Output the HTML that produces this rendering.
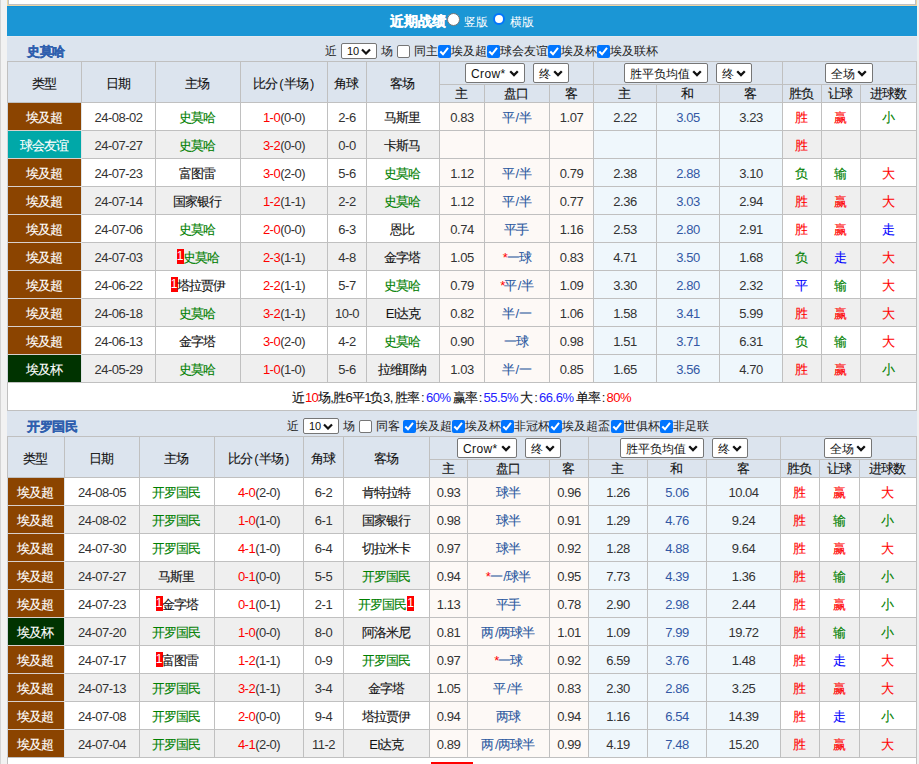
<!DOCTYPE html>
<html><head><meta charset="utf-8"><style>
html,body{margin:0;padding:0;}
body{width:919px;height:764px;overflow:hidden;position:relative;background:#fff;font-family:"Liberation Sans", sans-serif;}
body>div{position:absolute;box-sizing:content-box;}
.t{text-align:center;white-space:nowrap;}
.sel{background:#fff;border:1px solid #767676;border-radius:3px;}
.sel .sl{position:absolute;left:5px;top:0;line-height:17px;font-size:12px;color:#111;white-space:nowrap}
.sel .chev{position:absolute;right:5px;top:6px}
.c{letter-spacing:-1px;-webkit-text-stroke:0.12px currentColor;position:relative;left:-0.7px}
.one{display:inline-block;background:#f00;color:#fff;font-size:12px;width:7px;height:15px;line-height:15px;text-align:center;vertical-align:2px;letter-spacing:0!important}
.one span{letter-spacing:0!important}
</style></head><body>
<div style="left:0px;top:0px;width:1px;height:764px;background:#d4d4d4;"></div>
<div style="left:1px;top:0px;width:6px;height:764px;background:#f2f2f2;"></div>
<div style="left:917px;top:0px;width:2px;height:764px;background:#f0f0f0;"></div>
<div style="left:7px;top:0px;width:910px;height:6px;background:#ecd6a4;"></div>
<div style="left:8px;top:0px;width:908px;height:5px;background:#c0c0c4;"></div>
<div style="left:9px;top:0px;width:906px;height:4px;background:#ffffff;"></div>
<div style="left:7px;top:6px;width:910px;height:30px;background:#1b96d5;"></div>
<div style="left:7px;top:6px;width:910px;height:1px;background:#1190d6;"></div>
<div style="left:7px;top:36px;width:910px;height:1px;background:#e6e9ee;"></div>
<div style="left:390px;top:12px;color:#fff;font-weight:bold;font-size:14px;line-height:18px;white-space:nowrap;-webkit-text-stroke:0.3px #fff">近期战绩</div>
<div style="left:447px;top:13px;width:11px;height:11px;border-radius:50%;border:1px solid #767676;background:#fff"></div>
<div style="left:464px;top:13px;color:#fff;font-size:12px;line-height:18px;white-space:nowrap">竖版</div>
<div style="left:493px;top:13px;width:8px;height:8px;border-radius:50%;border:2px solid #0075ff;background:#fff"></div>
<div style="left:510px;top:13px;color:#fff;font-size:12px;line-height:18px;white-space:nowrap">横版</div>
<div style="left:7px;top:37px;width:910px;height:24px;background:#dce4ee;"></div>
<div style="left:27px;top:44px;color:#2f5fae;font-weight:bold;font-size:13px;line-height:15px;white-space:nowrap;letter-spacing:-0.3px;-webkit-text-stroke:0.3px #2f5fae">史莫哈</div>
<div style="left:325px;top:44px;color:#222;font-size:12px;line-height:15px;white-space:nowrap">近</div>
<div class="sel" style="left:341px;top:43px;width:34px;height:14px;border-radius:2px"><span class="sl" style="line-height:14px;left:5px;font-size:11px">10</span><svg class="chev" style="top:4px;right:5px" width="10" height="7" viewBox="0 0 10 7"><path d="M1 1.5 L5 5.5 L9 1.5" stroke="#111" stroke-width="2.2" fill="none"/></svg></div>
<div style="left:381px;top:44px;color:#222;font-size:12px;line-height:15px;white-space:nowrap">场</div>
<div style="left:397px;top:45px;width:11px;height:11px;background:#fff;border:1px solid #767676;border-radius:2px"></div>
<div style="left:414px;top:44px;color:#222;font-size:12px;line-height:15px;white-space:nowrap">同主</div>
<div style="left:438px;top:45px;width:13px;height:13px;background:#0075ff;border-radius:2px"><svg width="13" height="13" viewBox="0 0 13 13" style="position:absolute;left:0;top:0"><path d="M2.3 6.5 L5.0 9.3 L10.0 2.9" stroke="#fff" stroke-width="2" fill="none"/></svg></div>
<div style="left:451px;top:44px;color:#222;font-size:12px;line-height:15px;white-space:nowrap">埃及超</div>
<div style="left:487px;top:45px;width:13px;height:13px;background:#0075ff;border-radius:2px"><svg width="13" height="13" viewBox="0 0 13 13" style="position:absolute;left:0;top:0"><path d="M2.3 6.5 L5.0 9.3 L10.0 2.9" stroke="#fff" stroke-width="2" fill="none"/></svg></div>
<div style="left:500px;top:44px;color:#222;font-size:12px;line-height:15px;white-space:nowrap">球会友谊</div>
<div style="left:548px;top:45px;width:13px;height:13px;background:#0075ff;border-radius:2px"><svg width="13" height="13" viewBox="0 0 13 13" style="position:absolute;left:0;top:0"><path d="M2.3 6.5 L5.0 9.3 L10.0 2.9" stroke="#fff" stroke-width="2" fill="none"/></svg></div>
<div style="left:561px;top:44px;color:#222;font-size:12px;line-height:15px;white-space:nowrap">埃及杯</div>
<div style="left:597px;top:45px;width:13px;height:13px;background:#0075ff;border-radius:2px"><svg width="13" height="13" viewBox="0 0 13 13" style="position:absolute;left:0;top:0"><path d="M2.3 6.5 L5.0 9.3 L10.0 2.9" stroke="#fff" stroke-width="2" fill="none"/></svg></div>
<div style="left:610px;top:44px;color:#222;font-size:12px;line-height:15px;white-space:nowrap">埃及联杯</div>
<div style="left:7px;top:61px;width:910px;height:41px;background:#dce4ee;"></div>
<div style="left:7px;top:102px;width:910px;height:28px;background:#ffffff;"></div>
<div style="left:439px;top:102px;width:154px;height:28px;background:#fdf9f6;"></div>
<div style="left:593px;top:102px;width:189px;height:28px;background:#eff7fc;"></div>
<div style="left:7px;top:130px;width:910px;height:28px;background:#efefef;"></div>
<div style="left:439px;top:130px;width:154px;height:28px;background:#fdf9f6;"></div>
<div style="left:593px;top:130px;width:189px;height:28px;background:#eff7fc;"></div>
<div style="left:7px;top:158px;width:910px;height:28px;background:#ffffff;"></div>
<div style="left:439px;top:158px;width:154px;height:28px;background:#fdf9f6;"></div>
<div style="left:593px;top:158px;width:189px;height:28px;background:#eff7fc;"></div>
<div style="left:7px;top:186px;width:910px;height:28px;background:#efefef;"></div>
<div style="left:439px;top:186px;width:154px;height:28px;background:#fdf9f6;"></div>
<div style="left:593px;top:186px;width:189px;height:28px;background:#eff7fc;"></div>
<div style="left:7px;top:214px;width:910px;height:28px;background:#ffffff;"></div>
<div style="left:439px;top:214px;width:154px;height:28px;background:#fdf9f6;"></div>
<div style="left:593px;top:214px;width:189px;height:28px;background:#eff7fc;"></div>
<div style="left:7px;top:242px;width:910px;height:28px;background:#efefef;"></div>
<div style="left:439px;top:242px;width:154px;height:28px;background:#fdf9f6;"></div>
<div style="left:593px;top:242px;width:189px;height:28px;background:#eff7fc;"></div>
<div style="left:7px;top:270px;width:910px;height:28px;background:#ffffff;"></div>
<div style="left:439px;top:270px;width:154px;height:28px;background:#fdf9f6;"></div>
<div style="left:593px;top:270px;width:189px;height:28px;background:#eff7fc;"></div>
<div style="left:7px;top:298px;width:910px;height:28px;background:#efefef;"></div>
<div style="left:439px;top:298px;width:154px;height:28px;background:#fdf9f6;"></div>
<div style="left:593px;top:298px;width:189px;height:28px;background:#eff7fc;"></div>
<div style="left:7px;top:326px;width:910px;height:28px;background:#ffffff;"></div>
<div style="left:439px;top:326px;width:154px;height:28px;background:#fdf9f6;"></div>
<div style="left:593px;top:326px;width:189px;height:28px;background:#eff7fc;"></div>
<div style="left:7px;top:354px;width:910px;height:28px;background:#efefef;"></div>
<div style="left:439px;top:354px;width:154px;height:28px;background:#fdf9f6;"></div>
<div style="left:593px;top:354px;width:189px;height:28px;background:#eff7fc;"></div>
<div style="left:7px;top:382px;width:910px;height:28px;background:#ffffff;"></div>
<div style="left:7px;top:61px;width:910px;height:1px;background:#c0c0c0;"></div>
<div style="left:439px;top:84px;width:477px;height:1px;background:#c0c0c0;"></div>
<div style="left:7px;top:102px;width:910px;height:1px;background:#c0c0c0;"></div>
<div style="left:7px;top:130px;width:910px;height:1px;background:#c0c0c0;"></div>
<div style="left:7px;top:158px;width:910px;height:1px;background:#c0c0c0;"></div>
<div style="left:7px;top:186px;width:910px;height:1px;background:#c0c0c0;"></div>
<div style="left:7px;top:214px;width:910px;height:1px;background:#c0c0c0;"></div>
<div style="left:7px;top:242px;width:910px;height:1px;background:#c0c0c0;"></div>
<div style="left:7px;top:270px;width:910px;height:1px;background:#c0c0c0;"></div>
<div style="left:7px;top:298px;width:910px;height:1px;background:#c0c0c0;"></div>
<div style="left:7px;top:326px;width:910px;height:1px;background:#c0c0c0;"></div>
<div style="left:7px;top:354px;width:910px;height:1px;background:#c0c0c0;"></div>
<div style="left:7px;top:382px;width:910px;height:1px;background:#c0c0c0;"></div>
<div style="left:7px;top:410px;width:910px;height:1px;background:#c0c0c0;"></div>
<div style="left:7px;top:61px;width:1px;height:321px;background:#c0c0c0;"></div>
<div style="left:81px;top:61px;width:1px;height:321px;background:#c0c0c0;"></div>
<div style="left:155px;top:61px;width:1px;height:321px;background:#c0c0c0;"></div>
<div style="left:240px;top:61px;width:1px;height:321px;background:#c0c0c0;"></div>
<div style="left:327px;top:61px;width:1px;height:321px;background:#c0c0c0;"></div>
<div style="left:366px;top:61px;width:1px;height:321px;background:#c0c0c0;"></div>
<div style="left:439px;top:61px;width:1px;height:321px;background:#c0c0c0;"></div>
<div style="left:484px;top:84px;width:1px;height:298px;background:#c0c0c0;"></div>
<div style="left:549px;top:84px;width:1px;height:298px;background:#c0c0c0;"></div>
<div style="left:593px;top:61px;width:1px;height:321px;background:#c0c0c0;"></div>
<div style="left:656px;top:84px;width:1px;height:298px;background:#c0c0c0;"></div>
<div style="left:719px;top:84px;width:1px;height:298px;background:#c0c0c0;"></div>
<div style="left:782px;top:61px;width:1px;height:321px;background:#c0c0c0;"></div>
<div style="left:821px;top:84px;width:1px;height:298px;background:#c0c0c0;"></div>
<div style="left:860px;top:84px;width:1px;height:298px;background:#c0c0c0;"></div>
<div style="left:916px;top:61px;width:1px;height:321px;background:#c0c0c0;"></div>
<div style="left:7px;top:382px;width:1px;height:29px;background:#c0c0c0;"></div>
<div style="left:916px;top:382px;width:1px;height:29px;background:#c0c0c0;"></div>
<div style="left:7px;top:103px;width:1px;height:279px;background:#cdd3da;"></div>
<div style="left:81px;top:103px;width:1px;height:279px;background:#dfe3e6;"></div>
<div style="left:8px;top:103px;width:73px;height:27px;background:#8b4400;"></div>
<div style="left:8px;top:131px;width:73px;height:27px;background:#00a8a8;"></div>
<div style="left:8px;top:130px;width:73px;height:1px;background:#d8d0cc;"></div>
<div style="left:8px;top:159px;width:73px;height:27px;background:#8b4400;"></div>
<div style="left:8px;top:158px;width:73px;height:1px;background:#d8d0cc;"></div>
<div style="left:8px;top:187px;width:73px;height:27px;background:#8b4400;"></div>
<div style="left:8px;top:186px;width:73px;height:1px;background:#d8d0cc;"></div>
<div style="left:8px;top:215px;width:73px;height:27px;background:#8b4400;"></div>
<div style="left:8px;top:214px;width:73px;height:1px;background:#d8d0cc;"></div>
<div style="left:8px;top:243px;width:73px;height:27px;background:#8b4400;"></div>
<div style="left:8px;top:242px;width:73px;height:1px;background:#d8d0cc;"></div>
<div style="left:8px;top:271px;width:73px;height:27px;background:#8b4400;"></div>
<div style="left:8px;top:270px;width:73px;height:1px;background:#d8d0cc;"></div>
<div style="left:8px;top:299px;width:73px;height:27px;background:#8b4400;"></div>
<div style="left:8px;top:298px;width:73px;height:1px;background:#d8d0cc;"></div>
<div style="left:8px;top:327px;width:73px;height:27px;background:#8b4400;"></div>
<div style="left:8px;top:326px;width:73px;height:1px;background:#d8d0cc;"></div>
<div style="left:8px;top:355px;width:73px;height:27px;background:#003300;"></div>
<div style="left:8px;top:354px;width:73px;height:1px;background:#d8d0cc;"></div>
<div class="t" style="left:8px;top:64px;width:73px;height:40px;line-height:40px;color:#111111;font-size:13px;"><span class=c>类型</span></div>
<div class="t" style="left:82px;top:64px;width:73px;height:40px;line-height:40px;color:#111111;font-size:13px;"><span class=c>日期</span></div>
<div class="t" style="left:156px;top:64px;width:84px;height:40px;line-height:40px;color:#111111;font-size:13px;"><span class=c>主场</span></div>
<div class="t" style="left:241px;top:64px;width:86px;height:40px;line-height:40px;color:#111111;font-size:13px;"><span class=c>比分</span><span style="padding:0 2px 0 1px"><span style="letter-spacing:-0.5px">(</span></span><span class=c>半场</span><span style="padding-left:1px"><span style="letter-spacing:-0.5px">)</span></span></div>
<div class="t" style="left:328px;top:64px;width:38px;height:40px;line-height:40px;color:#111111;font-size:13px;"><span class=c>角球</span></div>
<div class="t" style="left:367px;top:64px;width:72px;height:40px;line-height:40px;color:#111111;font-size:13px;"><span class=c>客场</span></div>
<div class="t" style="left:440px;top:85px;width:44px;height:17px;line-height:17px;color:#111111;font-size:13px;"><span class=c>主</span></div>
<div class="t" style="left:485px;top:85px;width:64px;height:17px;line-height:17px;color:#111111;font-size:13px;"><span class=c>盘口</span></div>
<div class="t" style="left:550px;top:85px;width:43px;height:17px;line-height:17px;color:#111111;font-size:13px;"><span class=c>客</span></div>
<div class="t" style="left:594px;top:85px;width:62px;height:17px;line-height:17px;color:#111111;font-size:13px;"><span class=c>主</span></div>
<div class="t" style="left:657px;top:85px;width:62px;height:17px;line-height:17px;color:#111111;font-size:13px;"><span class=c>和</span></div>
<div class="t" style="left:720px;top:85px;width:62px;height:17px;line-height:17px;color:#111111;font-size:13px;"><span class=c>客</span></div>
<div class="t" style="left:783px;top:85px;width:38px;height:17px;line-height:17px;color:#111111;font-size:13px;"><span class=c>胜负</span></div>
<div class="t" style="left:822px;top:85px;width:38px;height:17px;line-height:17px;color:#111111;font-size:13px;"><span class=c>让球</span></div>
<div class="t" style="left:861px;top:85px;width:55px;height:17px;line-height:17px;color:#111111;font-size:13px;"><span class=c>进球数</span></div>
<div class="sel" style="left:465px;top:63px;width:58px;height:18px;border-radius:2px"><span class="sl" style="top:2px;letter-spacing:0.4px">Crow*</span><svg class="chev" width="10" height="7" viewBox="0 0 10 7"><path d="M1.2 1.2 L5 5 L8.8 1.2" stroke="#111" stroke-width="2.3" fill="none"/></svg></div>
<div class="sel" style="left:533px;top:63px;width:34px;height:18px;border-radius:2px"><span class="sl" style="top:2px;">终</span><svg class="chev" width="10" height="7" viewBox="0 0 10 7"><path d="M1.2 1.2 L5 5 L8.8 1.2" stroke="#111" stroke-width="2.3" fill="none"/></svg></div>
<div class="sel" style="left:624px;top:63px;width:82px;height:18px;border-radius:2px"><span class="sl" style="top:2px;">胜平负均值</span><svg class="chev" width="10" height="7" viewBox="0 0 10 7"><path d="M1.2 1.2 L5 5 L8.8 1.2" stroke="#111" stroke-width="2.3" fill="none"/></svg></div>
<div class="sel" style="left:716px;top:63px;width:34px;height:18px;border-radius:2px"><span class="sl" style="top:2px;">终</span><svg class="chev" width="10" height="7" viewBox="0 0 10 7"><path d="M1.2 1.2 L5 5 L8.8 1.2" stroke="#111" stroke-width="2.3" fill="none"/></svg></div>
<div class="sel" style="left:825px;top:63px;width:46px;height:18px;border-radius:2px"><span class="sl" style="top:2px;">全场</span><svg class="chev" width="10" height="7" viewBox="0 0 10 7"><path d="M1.2 1.2 L5 5 L8.8 1.2" stroke="#111" stroke-width="2.3" fill="none"/></svg></div>
<div class="t" style="left:8px;top:104px;width:73px;height:27px;line-height:27px;color:#ffffff;font-size:13px;"><span class=c>埃及超</span></div>
<div class="t" style="left:82px;top:104px;width:73px;height:27px;line-height:27px;color:#333333;font-size:13px;"><span style="letter-spacing:-0.5px">24-08-02</span></div>
<div class="t" style="left:156px;top:104px;width:84px;height:27px;line-height:27px;color:#111111;font-size:13px;"><span style="color:#008000"><span class=c>史莫哈</span></span></div>
<div class="t" style="left:241px;top:104px;width:86px;height:27px;line-height:27px;color:#333333;font-size:13px;"><span style="color:#ff0000"><span style="letter-spacing:-0.5px">1-0</span></span><span style="letter-spacing:-0.5px">(0-0)</span></div>
<div class="t" style="left:328px;top:104px;width:38px;height:27px;line-height:27px;color:#333333;font-size:13px;"><span style="letter-spacing:-0.5px">2-6</span></div>
<div class="t" style="left:367px;top:104px;width:72px;height:27px;line-height:27px;color:#111111;font-size:13px;"><span class=c>马斯里</span></div>
<div class="t" style="left:440px;top:104px;width:44px;height:27px;line-height:27px;color:#333333;font-size:13px;"><span style="letter-spacing:-0.5px">0.83</span></div>
<div class="t" style="left:485px;top:104px;width:64px;height:27px;line-height:27px;color:#2a58a0;font-size:13px;"><span class=c>平</span><span style="letter-spacing:-0.5px"><span style="padding:0 0.8px">/</span></span><span class=c>半</span></div>
<div class="t" style="left:550px;top:104px;width:43px;height:27px;line-height:27px;color:#333333;font-size:13px;"><span style="letter-spacing:-0.5px">1.07</span></div>
<div class="t" style="left:594px;top:104px;width:62px;height:27px;line-height:27px;color:#333333;font-size:13px;"><span style="letter-spacing:-0.5px">2.22</span></div>
<div class="t" style="left:657px;top:104px;width:62px;height:27px;line-height:27px;color:#3358a4;font-size:13px;"><span style="letter-spacing:-0.5px">3.05</span></div>
<div class="t" style="left:720px;top:104px;width:62px;height:27px;line-height:27px;color:#333333;font-size:13px;"><span style="letter-spacing:-0.5px">3.23</span></div>
<div class="t" style="left:783px;top:104px;width:38px;height:27px;line-height:27px;color:#ff0000;font-size:13px;"><span class=c>胜</span></div>
<div class="t" style="left:822px;top:104px;width:38px;height:27px;line-height:27px;color:#ff0000;font-size:13px;"><span class=c>赢</span></div>
<div class="t" style="left:861px;top:104px;width:55px;height:27px;line-height:27px;color:#008000;font-size:13px;"><span class=c>小</span></div>
<div class="t" style="left:8px;top:132px;width:73px;height:27px;line-height:27px;color:#ffffff;font-size:13px;"><span class=c>球会友谊</span></div>
<div class="t" style="left:82px;top:132px;width:73px;height:27px;line-height:27px;color:#333333;font-size:13px;"><span style="letter-spacing:-0.5px">24-07-27</span></div>
<div class="t" style="left:156px;top:132px;width:84px;height:27px;line-height:27px;color:#111111;font-size:13px;"><span style="color:#008000"><span class=c>史莫哈</span></span></div>
<div class="t" style="left:241px;top:132px;width:86px;height:27px;line-height:27px;color:#333333;font-size:13px;"><span style="color:#ff0000"><span style="letter-spacing:-0.5px">3-2</span></span><span style="letter-spacing:-0.5px">(0-0)</span></div>
<div class="t" style="left:328px;top:132px;width:38px;height:27px;line-height:27px;color:#333333;font-size:13px;"><span style="letter-spacing:-0.5px">0-0</span></div>
<div class="t" style="left:367px;top:132px;width:72px;height:27px;line-height:27px;color:#111111;font-size:13px;"><span class=c>卡斯马</span></div>
<div class="t" style="left:783px;top:132px;width:38px;height:27px;line-height:27px;color:#ff0000;font-size:13px;"><span class=c>胜</span></div>
<div class="t" style="left:8px;top:160px;width:73px;height:27px;line-height:27px;color:#ffffff;font-size:13px;"><span class=c>埃及超</span></div>
<div class="t" style="left:82px;top:160px;width:73px;height:27px;line-height:27px;color:#333333;font-size:13px;"><span style="letter-spacing:-0.5px">24-07-23</span></div>
<div class="t" style="left:156px;top:160px;width:84px;height:27px;line-height:27px;color:#111111;font-size:13px;"><span class=c>富图雷</span></div>
<div class="t" style="left:241px;top:160px;width:86px;height:27px;line-height:27px;color:#333333;font-size:13px;"><span style="color:#ff0000"><span style="letter-spacing:-0.5px">3-0</span></span><span style="letter-spacing:-0.5px">(2-0)</span></div>
<div class="t" style="left:328px;top:160px;width:38px;height:27px;line-height:27px;color:#333333;font-size:13px;"><span style="letter-spacing:-0.5px">5-6</span></div>
<div class="t" style="left:367px;top:160px;width:72px;height:27px;line-height:27px;color:#111111;font-size:13px;"><span style="color:#008000"><span class=c>史莫哈</span></span></div>
<div class="t" style="left:440px;top:160px;width:44px;height:27px;line-height:27px;color:#333333;font-size:13px;"><span style="letter-spacing:-0.5px">1.12</span></div>
<div class="t" style="left:485px;top:160px;width:64px;height:27px;line-height:27px;color:#2a58a0;font-size:13px;"><span class=c>平</span><span style="letter-spacing:-0.5px"><span style="padding:0 0.8px">/</span></span><span class=c>半</span></div>
<div class="t" style="left:550px;top:160px;width:43px;height:27px;line-height:27px;color:#333333;font-size:13px;"><span style="letter-spacing:-0.5px">0.79</span></div>
<div class="t" style="left:594px;top:160px;width:62px;height:27px;line-height:27px;color:#333333;font-size:13px;"><span style="letter-spacing:-0.5px">2.38</span></div>
<div class="t" style="left:657px;top:160px;width:62px;height:27px;line-height:27px;color:#3358a4;font-size:13px;"><span style="letter-spacing:-0.5px">2.88</span></div>
<div class="t" style="left:720px;top:160px;width:62px;height:27px;line-height:27px;color:#333333;font-size:13px;"><span style="letter-spacing:-0.5px">3.10</span></div>
<div class="t" style="left:783px;top:160px;width:38px;height:27px;line-height:27px;color:#008000;font-size:13px;"><span class=c>负</span></div>
<div class="t" style="left:822px;top:160px;width:38px;height:27px;line-height:27px;color:#008000;font-size:13px;"><span class=c>输</span></div>
<div class="t" style="left:861px;top:160px;width:55px;height:27px;line-height:27px;color:#ff0000;font-size:13px;"><span class=c>大</span></div>
<div class="t" style="left:8px;top:188px;width:73px;height:27px;line-height:27px;color:#ffffff;font-size:13px;"><span class=c>埃及超</span></div>
<div class="t" style="left:82px;top:188px;width:73px;height:27px;line-height:27px;color:#333333;font-size:13px;"><span style="letter-spacing:-0.5px">24-07-14</span></div>
<div class="t" style="left:156px;top:188px;width:84px;height:27px;line-height:27px;color:#111111;font-size:13px;"><span class=c>国家银行</span></div>
<div class="t" style="left:241px;top:188px;width:86px;height:27px;line-height:27px;color:#333333;font-size:13px;"><span style="color:#ff0000"><span style="letter-spacing:-0.5px">1-2</span></span><span style="letter-spacing:-0.5px">(1-1)</span></div>
<div class="t" style="left:328px;top:188px;width:38px;height:27px;line-height:27px;color:#333333;font-size:13px;"><span style="letter-spacing:-0.5px">2-2</span></div>
<div class="t" style="left:367px;top:188px;width:72px;height:27px;line-height:27px;color:#111111;font-size:13px;"><span style="color:#008000"><span class=c>史莫哈</span></span></div>
<div class="t" style="left:440px;top:188px;width:44px;height:27px;line-height:27px;color:#333333;font-size:13px;"><span style="letter-spacing:-0.5px">1.12</span></div>
<div class="t" style="left:485px;top:188px;width:64px;height:27px;line-height:27px;color:#2a58a0;font-size:13px;"><span class=c>平</span><span style="letter-spacing:-0.5px"><span style="padding:0 0.8px">/</span></span><span class=c>半</span></div>
<div class="t" style="left:550px;top:188px;width:43px;height:27px;line-height:27px;color:#333333;font-size:13px;"><span style="letter-spacing:-0.5px">0.77</span></div>
<div class="t" style="left:594px;top:188px;width:62px;height:27px;line-height:27px;color:#333333;font-size:13px;"><span style="letter-spacing:-0.5px">2.36</span></div>
<div class="t" style="left:657px;top:188px;width:62px;height:27px;line-height:27px;color:#3358a4;font-size:13px;"><span style="letter-spacing:-0.5px">3.03</span></div>
<div class="t" style="left:720px;top:188px;width:62px;height:27px;line-height:27px;color:#333333;font-size:13px;"><span style="letter-spacing:-0.5px">2.94</span></div>
<div class="t" style="left:783px;top:188px;width:38px;height:27px;line-height:27px;color:#ff0000;font-size:13px;"><span class=c>胜</span></div>
<div class="t" style="left:822px;top:188px;width:38px;height:27px;line-height:27px;color:#ff0000;font-size:13px;"><span class=c>赢</span></div>
<div class="t" style="left:861px;top:188px;width:55px;height:27px;line-height:27px;color:#ff0000;font-size:13px;"><span class=c>大</span></div>
<div class="t" style="left:8px;top:216px;width:73px;height:27px;line-height:27px;color:#ffffff;font-size:13px;"><span class=c>埃及超</span></div>
<div class="t" style="left:82px;top:216px;width:73px;height:27px;line-height:27px;color:#333333;font-size:13px;"><span style="letter-spacing:-0.5px">24-07-06</span></div>
<div class="t" style="left:156px;top:216px;width:84px;height:27px;line-height:27px;color:#111111;font-size:13px;"><span style="color:#008000"><span class=c>史莫哈</span></span></div>
<div class="t" style="left:241px;top:216px;width:86px;height:27px;line-height:27px;color:#333333;font-size:13px;"><span style="color:#ff0000"><span style="letter-spacing:-0.5px">2-0</span></span><span style="letter-spacing:-0.5px">(0-0)</span></div>
<div class="t" style="left:328px;top:216px;width:38px;height:27px;line-height:27px;color:#333333;font-size:13px;"><span style="letter-spacing:-0.5px">6-3</span></div>
<div class="t" style="left:367px;top:216px;width:72px;height:27px;line-height:27px;color:#111111;font-size:13px;"><span class=c>恩比</span></div>
<div class="t" style="left:440px;top:216px;width:44px;height:27px;line-height:27px;color:#333333;font-size:13px;"><span style="letter-spacing:-0.5px">0.74</span></div>
<div class="t" style="left:485px;top:216px;width:64px;height:27px;line-height:27px;color:#2a58a0;font-size:13px;"><span class=c>平手</span></div>
<div class="t" style="left:550px;top:216px;width:43px;height:27px;line-height:27px;color:#333333;font-size:13px;"><span style="letter-spacing:-0.5px">1.16</span></div>
<div class="t" style="left:594px;top:216px;width:62px;height:27px;line-height:27px;color:#333333;font-size:13px;"><span style="letter-spacing:-0.5px">2.53</span></div>
<div class="t" style="left:657px;top:216px;width:62px;height:27px;line-height:27px;color:#3358a4;font-size:13px;"><span style="letter-spacing:-0.5px">2.80</span></div>
<div class="t" style="left:720px;top:216px;width:62px;height:27px;line-height:27px;color:#333333;font-size:13px;"><span style="letter-spacing:-0.5px">2.91</span></div>
<div class="t" style="left:783px;top:216px;width:38px;height:27px;line-height:27px;color:#ff0000;font-size:13px;"><span class=c>胜</span></div>
<div class="t" style="left:822px;top:216px;width:38px;height:27px;line-height:27px;color:#ff0000;font-size:13px;"><span class=c>赢</span></div>
<div class="t" style="left:861px;top:216px;width:55px;height:27px;line-height:27px;color:#0000ff;font-size:13px;"><span class=c>走</span></div>
<div class="t" style="left:8px;top:244px;width:73px;height:27px;line-height:27px;color:#ffffff;font-size:13px;"><span class=c>埃及超</span></div>
<div class="t" style="left:82px;top:244px;width:73px;height:27px;line-height:27px;color:#333333;font-size:13px;"><span style="letter-spacing:-0.5px">24-07-03</span></div>
<div class="t" style="left:156px;top:244px;width:84px;height:27px;line-height:27px;color:#111111;font-size:13px;"><span class="one"><span style="letter-spacing:-0.5px">1</span></span><span style="color:#008000"><span class=c>史莫哈</span></span></div>
<div class="t" style="left:241px;top:244px;width:86px;height:27px;line-height:27px;color:#333333;font-size:13px;"><span style="color:#ff0000"><span style="letter-spacing:-0.5px">2-3</span></span><span style="letter-spacing:-0.5px">(1-1)</span></div>
<div class="t" style="left:328px;top:244px;width:38px;height:27px;line-height:27px;color:#333333;font-size:13px;"><span style="letter-spacing:-0.5px">4-8</span></div>
<div class="t" style="left:367px;top:244px;width:72px;height:27px;line-height:27px;color:#111111;font-size:13px;"><span class=c>金字塔</span></div>
<div class="t" style="left:440px;top:244px;width:44px;height:27px;line-height:27px;color:#333333;font-size:13px;"><span style="letter-spacing:-0.5px">1.05</span></div>
<div class="t" style="left:485px;top:244px;width:64px;height:27px;line-height:27px;color:#2a58a0;font-size:13px;"><span style="color:#f00"><span style="letter-spacing:-0.5px">*</span></span><span class=c>一球</span></div>
<div class="t" style="left:550px;top:244px;width:43px;height:27px;line-height:27px;color:#333333;font-size:13px;"><span style="letter-spacing:-0.5px">0.83</span></div>
<div class="t" style="left:594px;top:244px;width:62px;height:27px;line-height:27px;color:#333333;font-size:13px;"><span style="letter-spacing:-0.5px">4.71</span></div>
<div class="t" style="left:657px;top:244px;width:62px;height:27px;line-height:27px;color:#3358a4;font-size:13px;"><span style="letter-spacing:-0.5px">3.50</span></div>
<div class="t" style="left:720px;top:244px;width:62px;height:27px;line-height:27px;color:#333333;font-size:13px;"><span style="letter-spacing:-0.5px">1.68</span></div>
<div class="t" style="left:783px;top:244px;width:38px;height:27px;line-height:27px;color:#008000;font-size:13px;"><span class=c>负</span></div>
<div class="t" style="left:822px;top:244px;width:38px;height:27px;line-height:27px;color:#0000ff;font-size:13px;"><span class=c>走</span></div>
<div class="t" style="left:861px;top:244px;width:55px;height:27px;line-height:27px;color:#ff0000;font-size:13px;"><span class=c>大</span></div>
<div class="t" style="left:8px;top:272px;width:73px;height:27px;line-height:27px;color:#ffffff;font-size:13px;"><span class=c>埃及超</span></div>
<div class="t" style="left:82px;top:272px;width:73px;height:27px;line-height:27px;color:#333333;font-size:13px;"><span style="letter-spacing:-0.5px">24-06-22</span></div>
<div class="t" style="left:156px;top:272px;width:84px;height:27px;line-height:27px;color:#111111;font-size:13px;"><span class="one"><span style="letter-spacing:-0.5px">1</span></span><span class=c>塔拉贾伊</span></div>
<div class="t" style="left:241px;top:272px;width:86px;height:27px;line-height:27px;color:#333333;font-size:13px;"><span style="color:#ff0000"><span style="letter-spacing:-0.5px">2-2</span></span><span style="letter-spacing:-0.5px">(1-1)</span></div>
<div class="t" style="left:328px;top:272px;width:38px;height:27px;line-height:27px;color:#333333;font-size:13px;"><span style="letter-spacing:-0.5px">5-7</span></div>
<div class="t" style="left:367px;top:272px;width:72px;height:27px;line-height:27px;color:#111111;font-size:13px;"><span style="color:#008000"><span class=c>史莫哈</span></span></div>
<div class="t" style="left:440px;top:272px;width:44px;height:27px;line-height:27px;color:#333333;font-size:13px;"><span style="letter-spacing:-0.5px">0.79</span></div>
<div class="t" style="left:485px;top:272px;width:64px;height:27px;line-height:27px;color:#2a58a0;font-size:13px;"><span style="color:#f00"><span style="letter-spacing:-0.5px">*</span></span><span class=c>平</span><span style="letter-spacing:-0.5px"><span style="padding:0 0.8px">/</span></span><span class=c>半</span></div>
<div class="t" style="left:550px;top:272px;width:43px;height:27px;line-height:27px;color:#333333;font-size:13px;"><span style="letter-spacing:-0.5px">1.09</span></div>
<div class="t" style="left:594px;top:272px;width:62px;height:27px;line-height:27px;color:#333333;font-size:13px;"><span style="letter-spacing:-0.5px">3.30</span></div>
<div class="t" style="left:657px;top:272px;width:62px;height:27px;line-height:27px;color:#3358a4;font-size:13px;"><span style="letter-spacing:-0.5px">2.80</span></div>
<div class="t" style="left:720px;top:272px;width:62px;height:27px;line-height:27px;color:#333333;font-size:13px;"><span style="letter-spacing:-0.5px">2.32</span></div>
<div class="t" style="left:783px;top:272px;width:38px;height:27px;line-height:27px;color:#0000ff;font-size:13px;"><span class=c>平</span></div>
<div class="t" style="left:822px;top:272px;width:38px;height:27px;line-height:27px;color:#008000;font-size:13px;"><span class=c>输</span></div>
<div class="t" style="left:861px;top:272px;width:55px;height:27px;line-height:27px;color:#ff0000;font-size:13px;"><span class=c>大</span></div>
<div class="t" style="left:8px;top:300px;width:73px;height:27px;line-height:27px;color:#ffffff;font-size:13px;"><span class=c>埃及超</span></div>
<div class="t" style="left:82px;top:300px;width:73px;height:27px;line-height:27px;color:#333333;font-size:13px;"><span style="letter-spacing:-0.5px">24-06-18</span></div>
<div class="t" style="left:156px;top:300px;width:84px;height:27px;line-height:27px;color:#111111;font-size:13px;"><span style="color:#008000"><span class=c>史莫哈</span></span></div>
<div class="t" style="left:241px;top:300px;width:86px;height:27px;line-height:27px;color:#333333;font-size:13px;"><span style="color:#ff0000"><span style="letter-spacing:-0.5px">3-2</span></span><span style="letter-spacing:-0.5px">(1-1)</span></div>
<div class="t" style="left:328px;top:300px;width:38px;height:27px;line-height:27px;color:#333333;font-size:13px;"><span style="letter-spacing:-0.5px">10-0</span></div>
<div class="t" style="left:367px;top:300px;width:72px;height:27px;line-height:27px;color:#111111;font-size:13px;"><span style="letter-spacing:-0.5px">El</span><span class=c>达克</span></div>
<div class="t" style="left:440px;top:300px;width:44px;height:27px;line-height:27px;color:#333333;font-size:13px;"><span style="letter-spacing:-0.5px">0.82</span></div>
<div class="t" style="left:485px;top:300px;width:64px;height:27px;line-height:27px;color:#2a58a0;font-size:13px;"><span class=c>半</span><span style="letter-spacing:-0.5px"><span style="padding:0 0.8px">/</span></span><span class=c>一</span></div>
<div class="t" style="left:550px;top:300px;width:43px;height:27px;line-height:27px;color:#333333;font-size:13px;"><span style="letter-spacing:-0.5px">1.06</span></div>
<div class="t" style="left:594px;top:300px;width:62px;height:27px;line-height:27px;color:#333333;font-size:13px;"><span style="letter-spacing:-0.5px">1.58</span></div>
<div class="t" style="left:657px;top:300px;width:62px;height:27px;line-height:27px;color:#3358a4;font-size:13px;"><span style="letter-spacing:-0.5px">3.41</span></div>
<div class="t" style="left:720px;top:300px;width:62px;height:27px;line-height:27px;color:#333333;font-size:13px;"><span style="letter-spacing:-0.5px">5.99</span></div>
<div class="t" style="left:783px;top:300px;width:38px;height:27px;line-height:27px;color:#ff0000;font-size:13px;"><span class=c>胜</span></div>
<div class="t" style="left:822px;top:300px;width:38px;height:27px;line-height:27px;color:#ff0000;font-size:13px;"><span class=c>赢</span></div>
<div class="t" style="left:861px;top:300px;width:55px;height:27px;line-height:27px;color:#ff0000;font-size:13px;"><span class=c>大</span></div>
<div class="t" style="left:8px;top:328px;width:73px;height:27px;line-height:27px;color:#ffffff;font-size:13px;"><span class=c>埃及超</span></div>
<div class="t" style="left:82px;top:328px;width:73px;height:27px;line-height:27px;color:#333333;font-size:13px;"><span style="letter-spacing:-0.5px">24-06-13</span></div>
<div class="t" style="left:156px;top:328px;width:84px;height:27px;line-height:27px;color:#111111;font-size:13px;"><span class=c>金字塔</span></div>
<div class="t" style="left:241px;top:328px;width:86px;height:27px;line-height:27px;color:#333333;font-size:13px;"><span style="color:#ff0000"><span style="letter-spacing:-0.5px">3-0</span></span><span style="letter-spacing:-0.5px">(2-0)</span></div>
<div class="t" style="left:328px;top:328px;width:38px;height:27px;line-height:27px;color:#333333;font-size:13px;"><span style="letter-spacing:-0.5px">4-2</span></div>
<div class="t" style="left:367px;top:328px;width:72px;height:27px;line-height:27px;color:#111111;font-size:13px;"><span style="color:#008000"><span class=c>史莫哈</span></span></div>
<div class="t" style="left:440px;top:328px;width:44px;height:27px;line-height:27px;color:#333333;font-size:13px;"><span style="letter-spacing:-0.5px">0.90</span></div>
<div class="t" style="left:485px;top:328px;width:64px;height:27px;line-height:27px;color:#2a58a0;font-size:13px;"><span class=c>一球</span></div>
<div class="t" style="left:550px;top:328px;width:43px;height:27px;line-height:27px;color:#333333;font-size:13px;"><span style="letter-spacing:-0.5px">0.98</span></div>
<div class="t" style="left:594px;top:328px;width:62px;height:27px;line-height:27px;color:#333333;font-size:13px;"><span style="letter-spacing:-0.5px">1.51</span></div>
<div class="t" style="left:657px;top:328px;width:62px;height:27px;line-height:27px;color:#3358a4;font-size:13px;"><span style="letter-spacing:-0.5px">3.71</span></div>
<div class="t" style="left:720px;top:328px;width:62px;height:27px;line-height:27px;color:#333333;font-size:13px;"><span style="letter-spacing:-0.5px">6.31</span></div>
<div class="t" style="left:783px;top:328px;width:38px;height:27px;line-height:27px;color:#008000;font-size:13px;"><span class=c>负</span></div>
<div class="t" style="left:822px;top:328px;width:38px;height:27px;line-height:27px;color:#008000;font-size:13px;"><span class=c>输</span></div>
<div class="t" style="left:861px;top:328px;width:55px;height:27px;line-height:27px;color:#ff0000;font-size:13px;"><span class=c>大</span></div>
<div class="t" style="left:8px;top:356px;width:73px;height:27px;line-height:27px;color:#ffffff;font-size:13px;"><span class=c>埃及杯</span></div>
<div class="t" style="left:82px;top:356px;width:73px;height:27px;line-height:27px;color:#333333;font-size:13px;"><span style="letter-spacing:-0.5px">24-05-29</span></div>
<div class="t" style="left:156px;top:356px;width:84px;height:27px;line-height:27px;color:#111111;font-size:13px;"><span style="color:#008000"><span class=c>史莫哈</span></span></div>
<div class="t" style="left:241px;top:356px;width:86px;height:27px;line-height:27px;color:#333333;font-size:13px;"><span style="color:#ff0000"><span style="letter-spacing:-0.5px">1-0</span></span><span style="letter-spacing:-0.5px">(1-0)</span></div>
<div class="t" style="left:328px;top:356px;width:38px;height:27px;line-height:27px;color:#333333;font-size:13px;"><span style="letter-spacing:-0.5px">5-6</span></div>
<div class="t" style="left:367px;top:356px;width:72px;height:27px;line-height:27px;color:#111111;font-size:13px;"><span class=c>拉维耶纳</span></div>
<div class="t" style="left:440px;top:356px;width:44px;height:27px;line-height:27px;color:#333333;font-size:13px;"><span style="letter-spacing:-0.5px">1.03</span></div>
<div class="t" style="left:485px;top:356px;width:64px;height:27px;line-height:27px;color:#2a58a0;font-size:13px;"><span class=c>半</span><span style="letter-spacing:-0.5px"><span style="padding:0 0.8px">/</span></span><span class=c>一</span></div>
<div class="t" style="left:550px;top:356px;width:43px;height:27px;line-height:27px;color:#333333;font-size:13px;"><span style="letter-spacing:-0.5px">0.85</span></div>
<div class="t" style="left:594px;top:356px;width:62px;height:27px;line-height:27px;color:#333333;font-size:13px;"><span style="letter-spacing:-0.5px">1.65</span></div>
<div class="t" style="left:657px;top:356px;width:62px;height:27px;line-height:27px;color:#3358a4;font-size:13px;"><span style="letter-spacing:-0.5px">3.56</span></div>
<div class="t" style="left:720px;top:356px;width:62px;height:27px;line-height:27px;color:#333333;font-size:13px;"><span style="letter-spacing:-0.5px">4.70</span></div>
<div class="t" style="left:783px;top:356px;width:38px;height:27px;line-height:27px;color:#ff0000;font-size:13px;"><span class=c>胜</span></div>
<div class="t" style="left:822px;top:356px;width:38px;height:27px;line-height:27px;color:#ff0000;font-size:13px;"><span class=c>赢</span></div>
<div class="t" style="left:861px;top:356px;width:55px;height:27px;line-height:27px;color:#008000;font-size:13px;"><span class=c>小</span></div>
<div class="t" style="left:8px;top:384px;width:908px;height:27px;line-height:27px;color:#111111;font-size:13px;"><span class=c>近</span><span style="color:#f00"><span style="letter-spacing:-0.5px">10</span></span><span class=c>场</span><span style="letter-spacing:-0.5px">,</span><span class=c>胜</span><span style="letter-spacing:-0.5px">6</span><span class=c>平</span><span style="letter-spacing:-0.5px">1</span><span class=c>负</span><span style="letter-spacing:-0.5px">3, </span><span class=c>胜率</span><span style="letter-spacing:-0.5px"><span style="letter-spacing:0;padding:0 1.2px">:</span></span><span style="color:#22f"><span style="letter-spacing:-0.5px">60%</span></span><span style="letter-spacing:-0.5px"> </span><span class=c>赢率</span><span style="letter-spacing:-0.5px"><span style="letter-spacing:0;padding:0 1.2px">:</span></span><span style="color:#22f"><span style="letter-spacing:-0.5px">55.5%</span></span><span style="letter-spacing:-0.5px"> </span><span class=c>大</span><span style="letter-spacing:-0.5px"><span style="letter-spacing:0;padding:0 1.2px">:</span></span><span style="color:#22f"><span style="letter-spacing:-0.5px">66.6%</span></span><span style="letter-spacing:-0.5px"> </span><span class=c>单率</span><span style="letter-spacing:-0.5px"><span style="letter-spacing:0;padding:0 1.2px">:</span></span><span style="color:#f00"><span style="letter-spacing:-0.5px">80%</span></span></div>
<div style="left:7px;top:411px;width:910px;height:25px;background:#dce4ee;"></div>
<div style="left:27px;top:419px;color:#2f5fae;font-weight:bold;font-size:13px;line-height:15px;white-space:nowrap;letter-spacing:-0.3px;-webkit-text-stroke:0.3px #2f5fae">开罗国民</div>
<div style="left:287px;top:419px;color:#222;font-size:12px;line-height:15px;white-space:nowrap">近</div>
<div class="sel" style="left:303px;top:418px;width:34px;height:14px;border-radius:2px"><span class="sl" style="line-height:14px;left:5px;font-size:11px">10</span><svg class="chev" style="top:4px;right:5px" width="10" height="7" viewBox="0 0 10 7"><path d="M1 1.5 L5 5.5 L9 1.5" stroke="#111" stroke-width="2.2" fill="none"/></svg></div>
<div style="left:343px;top:419px;color:#222;font-size:12px;line-height:15px;white-space:nowrap">场</div>
<div style="left:359px;top:420px;width:11px;height:11px;background:#fff;border:1px solid #767676;border-radius:2px"></div>
<div style="left:376px;top:419px;color:#222;font-size:12px;line-height:15px;white-space:nowrap">同客</div>
<div style="left:403px;top:420px;width:13px;height:13px;background:#0075ff;border-radius:2px"><svg width="13" height="13" viewBox="0 0 13 13" style="position:absolute;left:0;top:0"><path d="M2.3 6.5 L5.0 9.3 L10.0 2.9" stroke="#fff" stroke-width="2" fill="none"/></svg></div>
<div style="left:416px;top:419px;color:#222;font-size:12px;line-height:15px;white-space:nowrap">埃及超</div>
<div style="left:452px;top:420px;width:13px;height:13px;background:#0075ff;border-radius:2px"><svg width="13" height="13" viewBox="0 0 13 13" style="position:absolute;left:0;top:0"><path d="M2.3 6.5 L5.0 9.3 L10.0 2.9" stroke="#fff" stroke-width="2" fill="none"/></svg></div>
<div style="left:465px;top:419px;color:#222;font-size:12px;line-height:15px;white-space:nowrap">埃及杯</div>
<div style="left:501px;top:420px;width:13px;height:13px;background:#0075ff;border-radius:2px"><svg width="13" height="13" viewBox="0 0 13 13" style="position:absolute;left:0;top:0"><path d="M2.3 6.5 L5.0 9.3 L10.0 2.9" stroke="#fff" stroke-width="2" fill="none"/></svg></div>
<div style="left:514px;top:419px;color:#222;font-size:12px;line-height:15px;white-space:nowrap">非冠杯</div>
<div style="left:549px;top:420px;width:13px;height:13px;background:#0075ff;border-radius:2px"><svg width="13" height="13" viewBox="0 0 13 13" style="position:absolute;left:0;top:0"><path d="M2.3 6.5 L5.0 9.3 L10.0 2.9" stroke="#fff" stroke-width="2" fill="none"/></svg></div>
<div style="left:562px;top:419px;color:#222;font-size:12px;line-height:15px;white-space:nowrap">埃及超盃</div>
<div style="left:611px;top:420px;width:13px;height:13px;background:#0075ff;border-radius:2px"><svg width="13" height="13" viewBox="0 0 13 13" style="position:absolute;left:0;top:0"><path d="M2.3 6.5 L5.0 9.3 L10.0 2.9" stroke="#fff" stroke-width="2" fill="none"/></svg></div>
<div style="left:624px;top:419px;color:#222;font-size:12px;line-height:15px;white-space:nowrap">世俱杯</div>
<div style="left:660px;top:420px;width:13px;height:13px;background:#0075ff;border-radius:2px"><svg width="13" height="13" viewBox="0 0 13 13" style="position:absolute;left:0;top:0"><path d="M2.3 6.5 L5.0 9.3 L10.0 2.9" stroke="#fff" stroke-width="2" fill="none"/></svg></div>
<div style="left:673px;top:419px;color:#222;font-size:12px;line-height:15px;white-space:nowrap">非足联</div>
<div style="left:7px;top:436px;width:910px;height:41px;background:#dce4ee;"></div>
<div style="left:7px;top:477px;width:910px;height:28px;background:#ffffff;"></div>
<div style="left:429px;top:477px;width:159px;height:28px;background:#fdf9f6;"></div>
<div style="left:588px;top:477px;width:192px;height:28px;background:#eff7fc;"></div>
<div style="left:7px;top:505px;width:910px;height:28px;background:#efefef;"></div>
<div style="left:429px;top:505px;width:159px;height:28px;background:#fdf9f6;"></div>
<div style="left:588px;top:505px;width:192px;height:28px;background:#eff7fc;"></div>
<div style="left:7px;top:533px;width:910px;height:28px;background:#ffffff;"></div>
<div style="left:429px;top:533px;width:159px;height:28px;background:#fdf9f6;"></div>
<div style="left:588px;top:533px;width:192px;height:28px;background:#eff7fc;"></div>
<div style="left:7px;top:561px;width:910px;height:28px;background:#efefef;"></div>
<div style="left:429px;top:561px;width:159px;height:28px;background:#fdf9f6;"></div>
<div style="left:588px;top:561px;width:192px;height:28px;background:#eff7fc;"></div>
<div style="left:7px;top:589px;width:910px;height:28px;background:#ffffff;"></div>
<div style="left:429px;top:589px;width:159px;height:28px;background:#fdf9f6;"></div>
<div style="left:588px;top:589px;width:192px;height:28px;background:#eff7fc;"></div>
<div style="left:7px;top:617px;width:910px;height:28px;background:#efefef;"></div>
<div style="left:429px;top:617px;width:159px;height:28px;background:#fdf9f6;"></div>
<div style="left:588px;top:617px;width:192px;height:28px;background:#eff7fc;"></div>
<div style="left:7px;top:645px;width:910px;height:28px;background:#ffffff;"></div>
<div style="left:429px;top:645px;width:159px;height:28px;background:#fdf9f6;"></div>
<div style="left:588px;top:645px;width:192px;height:28px;background:#eff7fc;"></div>
<div style="left:7px;top:673px;width:910px;height:28px;background:#efefef;"></div>
<div style="left:429px;top:673px;width:159px;height:28px;background:#fdf9f6;"></div>
<div style="left:588px;top:673px;width:192px;height:28px;background:#eff7fc;"></div>
<div style="left:7px;top:701px;width:910px;height:28px;background:#ffffff;"></div>
<div style="left:429px;top:701px;width:159px;height:28px;background:#fdf9f6;"></div>
<div style="left:588px;top:701px;width:192px;height:28px;background:#eff7fc;"></div>
<div style="left:7px;top:729px;width:910px;height:28px;background:#efefef;"></div>
<div style="left:429px;top:729px;width:159px;height:28px;background:#fdf9f6;"></div>
<div style="left:588px;top:729px;width:192px;height:28px;background:#eff7fc;"></div>
<div style="left:7px;top:757px;width:910px;height:28px;background:#ffffff;"></div>
<div style="left:7px;top:436px;width:910px;height:1px;background:#c0c0c0;"></div>
<div style="left:429px;top:459px;width:487px;height:1px;background:#c0c0c0;"></div>
<div style="left:7px;top:477px;width:910px;height:1px;background:#c0c0c0;"></div>
<div style="left:7px;top:505px;width:910px;height:1px;background:#c0c0c0;"></div>
<div style="left:7px;top:533px;width:910px;height:1px;background:#c0c0c0;"></div>
<div style="left:7px;top:561px;width:910px;height:1px;background:#c0c0c0;"></div>
<div style="left:7px;top:589px;width:910px;height:1px;background:#c0c0c0;"></div>
<div style="left:7px;top:617px;width:910px;height:1px;background:#c0c0c0;"></div>
<div style="left:7px;top:645px;width:910px;height:1px;background:#c0c0c0;"></div>
<div style="left:7px;top:673px;width:910px;height:1px;background:#c0c0c0;"></div>
<div style="left:7px;top:701px;width:910px;height:1px;background:#c0c0c0;"></div>
<div style="left:7px;top:729px;width:910px;height:1px;background:#c0c0c0;"></div>
<div style="left:7px;top:757px;width:910px;height:1px;background:#c0c0c0;"></div>
<div style="left:7px;top:785px;width:910px;height:1px;background:#c0c0c0;"></div>
<div style="left:7px;top:436px;width:1px;height:321px;background:#c0c0c0;"></div>
<div style="left:64px;top:436px;width:1px;height:321px;background:#c0c0c0;"></div>
<div style="left:139px;top:436px;width:1px;height:321px;background:#c0c0c0;"></div>
<div style="left:214px;top:436px;width:1px;height:321px;background:#c0c0c0;"></div>
<div style="left:303px;top:436px;width:1px;height:321px;background:#c0c0c0;"></div>
<div style="left:343px;top:436px;width:1px;height:321px;background:#c0c0c0;"></div>
<div style="left:429px;top:436px;width:1px;height:321px;background:#c0c0c0;"></div>
<div style="left:467px;top:459px;width:1px;height:298px;background:#c0c0c0;"></div>
<div style="left:549px;top:459px;width:1px;height:298px;background:#c0c0c0;"></div>
<div style="left:588px;top:436px;width:1px;height:321px;background:#c0c0c0;"></div>
<div style="left:647px;top:459px;width:1px;height:298px;background:#c0c0c0;"></div>
<div style="left:706px;top:459px;width:1px;height:298px;background:#c0c0c0;"></div>
<div style="left:780px;top:436px;width:1px;height:321px;background:#c0c0c0;"></div>
<div style="left:819px;top:459px;width:1px;height:298px;background:#c0c0c0;"></div>
<div style="left:859px;top:459px;width:1px;height:298px;background:#c0c0c0;"></div>
<div style="left:916px;top:436px;width:1px;height:321px;background:#c0c0c0;"></div>
<div style="left:7px;top:757px;width:1px;height:29px;background:#c0c0c0;"></div>
<div style="left:916px;top:757px;width:1px;height:29px;background:#c0c0c0;"></div>
<div style="left:7px;top:478px;width:1px;height:279px;background:#cdd3da;"></div>
<div style="left:64px;top:478px;width:1px;height:279px;background:#dfe3e6;"></div>
<div style="left:8px;top:478px;width:56px;height:27px;background:#8b4400;"></div>
<div style="left:8px;top:506px;width:56px;height:27px;background:#8b4400;"></div>
<div style="left:8px;top:505px;width:56px;height:1px;background:#d8d0cc;"></div>
<div style="left:8px;top:534px;width:56px;height:27px;background:#8b4400;"></div>
<div style="left:8px;top:533px;width:56px;height:1px;background:#d8d0cc;"></div>
<div style="left:8px;top:562px;width:56px;height:27px;background:#8b4400;"></div>
<div style="left:8px;top:561px;width:56px;height:1px;background:#d8d0cc;"></div>
<div style="left:8px;top:590px;width:56px;height:27px;background:#8b4400;"></div>
<div style="left:8px;top:589px;width:56px;height:1px;background:#d8d0cc;"></div>
<div style="left:8px;top:618px;width:56px;height:27px;background:#003300;"></div>
<div style="left:8px;top:617px;width:56px;height:1px;background:#d8d0cc;"></div>
<div style="left:8px;top:646px;width:56px;height:27px;background:#8b4400;"></div>
<div style="left:8px;top:645px;width:56px;height:1px;background:#d8d0cc;"></div>
<div style="left:8px;top:674px;width:56px;height:27px;background:#8b4400;"></div>
<div style="left:8px;top:673px;width:56px;height:1px;background:#d8d0cc;"></div>
<div style="left:8px;top:702px;width:56px;height:27px;background:#8b4400;"></div>
<div style="left:8px;top:701px;width:56px;height:1px;background:#d8d0cc;"></div>
<div style="left:8px;top:730px;width:56px;height:27px;background:#8b4400;"></div>
<div style="left:8px;top:729px;width:56px;height:1px;background:#d8d0cc;"></div>
<div class="t" style="left:8px;top:439px;width:56px;height:40px;line-height:40px;color:#111111;font-size:13px;"><span class=c>类型</span></div>
<div class="t" style="left:65px;top:439px;width:74px;height:40px;line-height:40px;color:#111111;font-size:13px;"><span class=c>日期</span></div>
<div class="t" style="left:140px;top:439px;width:74px;height:40px;line-height:40px;color:#111111;font-size:13px;"><span class=c>主场</span></div>
<div class="t" style="left:215px;top:439px;width:88px;height:40px;line-height:40px;color:#111111;font-size:13px;"><span class=c>比分</span><span style="padding:0 2px 0 1px"><span style="letter-spacing:-0.5px">(</span></span><span class=c>半场</span><span style="padding-left:1px"><span style="letter-spacing:-0.5px">)</span></span></div>
<div class="t" style="left:304px;top:439px;width:39px;height:40px;line-height:40px;color:#111111;font-size:13px;"><span class=c>角球</span></div>
<div class="t" style="left:344px;top:439px;width:85px;height:40px;line-height:40px;color:#111111;font-size:13px;"><span class=c>客场</span></div>
<div class="t" style="left:430px;top:460px;width:37px;height:17px;line-height:17px;color:#111111;font-size:13px;"><span class=c>主</span></div>
<div class="t" style="left:468px;top:460px;width:81px;height:17px;line-height:17px;color:#111111;font-size:13px;"><span class=c>盘口</span></div>
<div class="t" style="left:550px;top:460px;width:38px;height:17px;line-height:17px;color:#111111;font-size:13px;"><span class=c>客</span></div>
<div class="t" style="left:589px;top:460px;width:58px;height:17px;line-height:17px;color:#111111;font-size:13px;"><span class=c>主</span></div>
<div class="t" style="left:648px;top:460px;width:58px;height:17px;line-height:17px;color:#111111;font-size:13px;"><span class=c>和</span></div>
<div class="t" style="left:707px;top:460px;width:73px;height:17px;line-height:17px;color:#111111;font-size:13px;"><span class=c>客</span></div>
<div class="t" style="left:781px;top:460px;width:38px;height:17px;line-height:17px;color:#111111;font-size:13px;"><span class=c>胜负</span></div>
<div class="t" style="left:820px;top:460px;width:39px;height:17px;line-height:17px;color:#111111;font-size:13px;"><span class=c>让球</span></div>
<div class="t" style="left:860px;top:460px;width:56px;height:17px;line-height:17px;color:#111111;font-size:13px;"><span class=c>进球数</span></div>
<div class="sel" style="left:457px;top:438px;width:58px;height:18px;border-radius:2px"><span class="sl" style="top:2px;letter-spacing:0.4px">Crow*</span><svg class="chev" width="10" height="7" viewBox="0 0 10 7"><path d="M1.2 1.2 L5 5 L8.8 1.2" stroke="#111" stroke-width="2.3" fill="none"/></svg></div>
<div class="sel" style="left:525px;top:438px;width:34px;height:18px;border-radius:2px"><span class="sl" style="top:2px;">终</span><svg class="chev" width="10" height="7" viewBox="0 0 10 7"><path d="M1.2 1.2 L5 5 L8.8 1.2" stroke="#111" stroke-width="2.3" fill="none"/></svg></div>
<div class="sel" style="left:620px;top:438px;width:82px;height:18px;border-radius:2px"><span class="sl" style="top:2px;">胜平负均值</span><svg class="chev" width="10" height="7" viewBox="0 0 10 7"><path d="M1.2 1.2 L5 5 L8.8 1.2" stroke="#111" stroke-width="2.3" fill="none"/></svg></div>
<div class="sel" style="left:712px;top:438px;width:34px;height:18px;border-radius:2px"><span class="sl" style="top:2px;">终</span><svg class="chev" width="10" height="7" viewBox="0 0 10 7"><path d="M1.2 1.2 L5 5 L8.8 1.2" stroke="#111" stroke-width="2.3" fill="none"/></svg></div>
<div class="sel" style="left:824px;top:438px;width:46px;height:18px;border-radius:2px"><span class="sl" style="top:2px;">全场</span><svg class="chev" width="10" height="7" viewBox="0 0 10 7"><path d="M1.2 1.2 L5 5 L8.8 1.2" stroke="#111" stroke-width="2.3" fill="none"/></svg></div>
<div class="t" style="left:8px;top:479px;width:56px;height:27px;line-height:27px;color:#ffffff;font-size:13px;"><span class=c>埃及超</span></div>
<div class="t" style="left:65px;top:479px;width:74px;height:27px;line-height:27px;color:#333333;font-size:13px;"><span style="letter-spacing:-0.5px">24-08-05</span></div>
<div class="t" style="left:140px;top:479px;width:74px;height:27px;line-height:27px;color:#111111;font-size:13px;"><span style="color:#008000"><span class=c>开罗国民</span></span></div>
<div class="t" style="left:215px;top:479px;width:88px;height:27px;line-height:27px;color:#333333;font-size:13px;"><span style="color:#ff0000"><span style="letter-spacing:-0.5px">4-0</span></span><span style="letter-spacing:-0.5px">(2-0)</span></div>
<div class="t" style="left:304px;top:479px;width:39px;height:27px;line-height:27px;color:#333333;font-size:13px;"><span style="letter-spacing:-0.5px">6-2</span></div>
<div class="t" style="left:344px;top:479px;width:85px;height:27px;line-height:27px;color:#111111;font-size:13px;"><span class=c>肯特拉特</span></div>
<div class="t" style="left:430px;top:479px;width:37px;height:27px;line-height:27px;color:#333333;font-size:13px;"><span style="letter-spacing:-0.5px">0.93</span></div>
<div class="t" style="left:468px;top:479px;width:81px;height:27px;line-height:27px;color:#2a58a0;font-size:13px;"><span class=c>球半</span></div>
<div class="t" style="left:550px;top:479px;width:38px;height:27px;line-height:27px;color:#333333;font-size:13px;"><span style="letter-spacing:-0.5px">0.96</span></div>
<div class="t" style="left:589px;top:479px;width:58px;height:27px;line-height:27px;color:#333333;font-size:13px;"><span style="letter-spacing:-0.5px">1.26</span></div>
<div class="t" style="left:648px;top:479px;width:58px;height:27px;line-height:27px;color:#3358a4;font-size:13px;"><span style="letter-spacing:-0.5px">5.06</span></div>
<div class="t" style="left:707px;top:479px;width:73px;height:27px;line-height:27px;color:#333333;font-size:13px;"><span style="letter-spacing:-0.5px">10.04</span></div>
<div class="t" style="left:781px;top:479px;width:38px;height:27px;line-height:27px;color:#ff0000;font-size:13px;"><span class=c>胜</span></div>
<div class="t" style="left:820px;top:479px;width:39px;height:27px;line-height:27px;color:#ff0000;font-size:13px;"><span class=c>赢</span></div>
<div class="t" style="left:860px;top:479px;width:56px;height:27px;line-height:27px;color:#ff0000;font-size:13px;"><span class=c>大</span></div>
<div class="t" style="left:8px;top:507px;width:56px;height:27px;line-height:27px;color:#ffffff;font-size:13px;"><span class=c>埃及超</span></div>
<div class="t" style="left:65px;top:507px;width:74px;height:27px;line-height:27px;color:#333333;font-size:13px;"><span style="letter-spacing:-0.5px">24-08-02</span></div>
<div class="t" style="left:140px;top:507px;width:74px;height:27px;line-height:27px;color:#111111;font-size:13px;"><span style="color:#008000"><span class=c>开罗国民</span></span></div>
<div class="t" style="left:215px;top:507px;width:88px;height:27px;line-height:27px;color:#333333;font-size:13px;"><span style="color:#ff0000"><span style="letter-spacing:-0.5px">1-0</span></span><span style="letter-spacing:-0.5px">(1-0)</span></div>
<div class="t" style="left:304px;top:507px;width:39px;height:27px;line-height:27px;color:#333333;font-size:13px;"><span style="letter-spacing:-0.5px">6-1</span></div>
<div class="t" style="left:344px;top:507px;width:85px;height:27px;line-height:27px;color:#111111;font-size:13px;"><span class=c>国家银行</span></div>
<div class="t" style="left:430px;top:507px;width:37px;height:27px;line-height:27px;color:#333333;font-size:13px;"><span style="letter-spacing:-0.5px">0.98</span></div>
<div class="t" style="left:468px;top:507px;width:81px;height:27px;line-height:27px;color:#2a58a0;font-size:13px;"><span class=c>球半</span></div>
<div class="t" style="left:550px;top:507px;width:38px;height:27px;line-height:27px;color:#333333;font-size:13px;"><span style="letter-spacing:-0.5px">0.91</span></div>
<div class="t" style="left:589px;top:507px;width:58px;height:27px;line-height:27px;color:#333333;font-size:13px;"><span style="letter-spacing:-0.5px">1.29</span></div>
<div class="t" style="left:648px;top:507px;width:58px;height:27px;line-height:27px;color:#3358a4;font-size:13px;"><span style="letter-spacing:-0.5px">4.76</span></div>
<div class="t" style="left:707px;top:507px;width:73px;height:27px;line-height:27px;color:#333333;font-size:13px;"><span style="letter-spacing:-0.5px">9.24</span></div>
<div class="t" style="left:781px;top:507px;width:38px;height:27px;line-height:27px;color:#ff0000;font-size:13px;"><span class=c>胜</span></div>
<div class="t" style="left:820px;top:507px;width:39px;height:27px;line-height:27px;color:#008000;font-size:13px;"><span class=c>输</span></div>
<div class="t" style="left:860px;top:507px;width:56px;height:27px;line-height:27px;color:#008000;font-size:13px;"><span class=c>小</span></div>
<div class="t" style="left:8px;top:535px;width:56px;height:27px;line-height:27px;color:#ffffff;font-size:13px;"><span class=c>埃及超</span></div>
<div class="t" style="left:65px;top:535px;width:74px;height:27px;line-height:27px;color:#333333;font-size:13px;"><span style="letter-spacing:-0.5px">24-07-30</span></div>
<div class="t" style="left:140px;top:535px;width:74px;height:27px;line-height:27px;color:#111111;font-size:13px;"><span style="color:#008000"><span class=c>开罗国民</span></span></div>
<div class="t" style="left:215px;top:535px;width:88px;height:27px;line-height:27px;color:#333333;font-size:13px;"><span style="color:#ff0000"><span style="letter-spacing:-0.5px">4-1</span></span><span style="letter-spacing:-0.5px">(1-0)</span></div>
<div class="t" style="left:304px;top:535px;width:39px;height:27px;line-height:27px;color:#333333;font-size:13px;"><span style="letter-spacing:-0.5px">6-4</span></div>
<div class="t" style="left:344px;top:535px;width:85px;height:27px;line-height:27px;color:#111111;font-size:13px;"><span class=c>切拉米卡</span></div>
<div class="t" style="left:430px;top:535px;width:37px;height:27px;line-height:27px;color:#333333;font-size:13px;"><span style="letter-spacing:-0.5px">0.97</span></div>
<div class="t" style="left:468px;top:535px;width:81px;height:27px;line-height:27px;color:#2a58a0;font-size:13px;"><span class=c>球半</span></div>
<div class="t" style="left:550px;top:535px;width:38px;height:27px;line-height:27px;color:#333333;font-size:13px;"><span style="letter-spacing:-0.5px">0.92</span></div>
<div class="t" style="left:589px;top:535px;width:58px;height:27px;line-height:27px;color:#333333;font-size:13px;"><span style="letter-spacing:-0.5px">1.28</span></div>
<div class="t" style="left:648px;top:535px;width:58px;height:27px;line-height:27px;color:#3358a4;font-size:13px;"><span style="letter-spacing:-0.5px">4.88</span></div>
<div class="t" style="left:707px;top:535px;width:73px;height:27px;line-height:27px;color:#333333;font-size:13px;"><span style="letter-spacing:-0.5px">9.64</span></div>
<div class="t" style="left:781px;top:535px;width:38px;height:27px;line-height:27px;color:#ff0000;font-size:13px;"><span class=c>胜</span></div>
<div class="t" style="left:820px;top:535px;width:39px;height:27px;line-height:27px;color:#ff0000;font-size:13px;"><span class=c>赢</span></div>
<div class="t" style="left:860px;top:535px;width:56px;height:27px;line-height:27px;color:#ff0000;font-size:13px;"><span class=c>大</span></div>
<div class="t" style="left:8px;top:563px;width:56px;height:27px;line-height:27px;color:#ffffff;font-size:13px;"><span class=c>埃及超</span></div>
<div class="t" style="left:65px;top:563px;width:74px;height:27px;line-height:27px;color:#333333;font-size:13px;"><span style="letter-spacing:-0.5px">24-07-27</span></div>
<div class="t" style="left:140px;top:563px;width:74px;height:27px;line-height:27px;color:#111111;font-size:13px;"><span class=c>马斯里</span></div>
<div class="t" style="left:215px;top:563px;width:88px;height:27px;line-height:27px;color:#333333;font-size:13px;"><span style="color:#ff0000"><span style="letter-spacing:-0.5px">0-1</span></span><span style="letter-spacing:-0.5px">(0-0)</span></div>
<div class="t" style="left:304px;top:563px;width:39px;height:27px;line-height:27px;color:#333333;font-size:13px;"><span style="letter-spacing:-0.5px">5-5</span></div>
<div class="t" style="left:344px;top:563px;width:85px;height:27px;line-height:27px;color:#111111;font-size:13px;"><span style="color:#008000"><span class=c>开罗国民</span></span></div>
<div class="t" style="left:430px;top:563px;width:37px;height:27px;line-height:27px;color:#333333;font-size:13px;"><span style="letter-spacing:-0.5px">0.94</span></div>
<div class="t" style="left:468px;top:563px;width:81px;height:27px;line-height:27px;color:#2a58a0;font-size:13px;"><span style="color:#f00"><span style="letter-spacing:-0.5px">*</span></span><span class=c>一</span><span style="letter-spacing:-0.5px"><span style="padding:0 0.8px">/</span></span><span class=c>球半</span></div>
<div class="t" style="left:550px;top:563px;width:38px;height:27px;line-height:27px;color:#333333;font-size:13px;"><span style="letter-spacing:-0.5px">0.95</span></div>
<div class="t" style="left:589px;top:563px;width:58px;height:27px;line-height:27px;color:#333333;font-size:13px;"><span style="letter-spacing:-0.5px">7.73</span></div>
<div class="t" style="left:648px;top:563px;width:58px;height:27px;line-height:27px;color:#3358a4;font-size:13px;"><span style="letter-spacing:-0.5px">4.39</span></div>
<div class="t" style="left:707px;top:563px;width:73px;height:27px;line-height:27px;color:#333333;font-size:13px;"><span style="letter-spacing:-0.5px">1.36</span></div>
<div class="t" style="left:781px;top:563px;width:38px;height:27px;line-height:27px;color:#ff0000;font-size:13px;"><span class=c>胜</span></div>
<div class="t" style="left:820px;top:563px;width:39px;height:27px;line-height:27px;color:#008000;font-size:13px;"><span class=c>输</span></div>
<div class="t" style="left:860px;top:563px;width:56px;height:27px;line-height:27px;color:#008000;font-size:13px;"><span class=c>小</span></div>
<div class="t" style="left:8px;top:591px;width:56px;height:27px;line-height:27px;color:#ffffff;font-size:13px;"><span class=c>埃及超</span></div>
<div class="t" style="left:65px;top:591px;width:74px;height:27px;line-height:27px;color:#333333;font-size:13px;"><span style="letter-spacing:-0.5px">24-07-23</span></div>
<div class="t" style="left:140px;top:591px;width:74px;height:27px;line-height:27px;color:#111111;font-size:13px;"><span class="one"><span style="letter-spacing:-0.5px">1</span></span><span class=c>金字塔</span></div>
<div class="t" style="left:215px;top:591px;width:88px;height:27px;line-height:27px;color:#333333;font-size:13px;"><span style="color:#ff0000"><span style="letter-spacing:-0.5px">0-1</span></span><span style="letter-spacing:-0.5px">(0-1)</span></div>
<div class="t" style="left:304px;top:591px;width:39px;height:27px;line-height:27px;color:#333333;font-size:13px;"><span style="letter-spacing:-0.5px">2-1</span></div>
<div class="t" style="left:344px;top:591px;width:85px;height:27px;line-height:27px;color:#111111;font-size:13px;"><span style="color:#008000"><span class=c>开罗国民</span></span><span class="one"><span style="letter-spacing:-0.5px">1</span></span></div>
<div class="t" style="left:430px;top:591px;width:37px;height:27px;line-height:27px;color:#333333;font-size:13px;"><span style="letter-spacing:-0.5px">1.13</span></div>
<div class="t" style="left:468px;top:591px;width:81px;height:27px;line-height:27px;color:#2a58a0;font-size:13px;"><span class=c>平手</span></div>
<div class="t" style="left:550px;top:591px;width:38px;height:27px;line-height:27px;color:#333333;font-size:13px;"><span style="letter-spacing:-0.5px">0.78</span></div>
<div class="t" style="left:589px;top:591px;width:58px;height:27px;line-height:27px;color:#333333;font-size:13px;"><span style="letter-spacing:-0.5px">2.90</span></div>
<div class="t" style="left:648px;top:591px;width:58px;height:27px;line-height:27px;color:#3358a4;font-size:13px;"><span style="letter-spacing:-0.5px">2.98</span></div>
<div class="t" style="left:707px;top:591px;width:73px;height:27px;line-height:27px;color:#333333;font-size:13px;"><span style="letter-spacing:-0.5px">2.44</span></div>
<div class="t" style="left:781px;top:591px;width:38px;height:27px;line-height:27px;color:#ff0000;font-size:13px;"><span class=c>胜</span></div>
<div class="t" style="left:820px;top:591px;width:39px;height:27px;line-height:27px;color:#ff0000;font-size:13px;"><span class=c>赢</span></div>
<div class="t" style="left:860px;top:591px;width:56px;height:27px;line-height:27px;color:#008000;font-size:13px;"><span class=c>小</span></div>
<div class="t" style="left:8px;top:619px;width:56px;height:27px;line-height:27px;color:#ffffff;font-size:13px;"><span class=c>埃及杯</span></div>
<div class="t" style="left:65px;top:619px;width:74px;height:27px;line-height:27px;color:#333333;font-size:13px;"><span style="letter-spacing:-0.5px">24-07-20</span></div>
<div class="t" style="left:140px;top:619px;width:74px;height:27px;line-height:27px;color:#111111;font-size:13px;"><span style="color:#008000"><span class=c>开罗国民</span></span></div>
<div class="t" style="left:215px;top:619px;width:88px;height:27px;line-height:27px;color:#333333;font-size:13px;"><span style="color:#ff0000"><span style="letter-spacing:-0.5px">1-0</span></span><span style="letter-spacing:-0.5px">(0-0)</span></div>
<div class="t" style="left:304px;top:619px;width:39px;height:27px;line-height:27px;color:#333333;font-size:13px;"><span style="letter-spacing:-0.5px">8-0</span></div>
<div class="t" style="left:344px;top:619px;width:85px;height:27px;line-height:27px;color:#111111;font-size:13px;"><span class=c>阿洛米尼</span></div>
<div class="t" style="left:430px;top:619px;width:37px;height:27px;line-height:27px;color:#333333;font-size:13px;"><span style="letter-spacing:-0.5px">0.81</span></div>
<div class="t" style="left:468px;top:619px;width:81px;height:27px;line-height:27px;color:#2a58a0;font-size:13px;"><span class=c>两</span><span style="letter-spacing:-0.5px"><span style="padding:0 0.8px">/</span></span><span class=c>两球半</span></div>
<div class="t" style="left:550px;top:619px;width:38px;height:27px;line-height:27px;color:#333333;font-size:13px;"><span style="letter-spacing:-0.5px">1.01</span></div>
<div class="t" style="left:589px;top:619px;width:58px;height:27px;line-height:27px;color:#333333;font-size:13px;"><span style="letter-spacing:-0.5px">1.09</span></div>
<div class="t" style="left:648px;top:619px;width:58px;height:27px;line-height:27px;color:#3358a4;font-size:13px;"><span style="letter-spacing:-0.5px">7.99</span></div>
<div class="t" style="left:707px;top:619px;width:73px;height:27px;line-height:27px;color:#333333;font-size:13px;"><span style="letter-spacing:-0.5px">19.72</span></div>
<div class="t" style="left:781px;top:619px;width:38px;height:27px;line-height:27px;color:#ff0000;font-size:13px;"><span class=c>胜</span></div>
<div class="t" style="left:820px;top:619px;width:39px;height:27px;line-height:27px;color:#008000;font-size:13px;"><span class=c>输</span></div>
<div class="t" style="left:860px;top:619px;width:56px;height:27px;line-height:27px;color:#008000;font-size:13px;"><span class=c>小</span></div>
<div class="t" style="left:8px;top:647px;width:56px;height:27px;line-height:27px;color:#ffffff;font-size:13px;"><span class=c>埃及超</span></div>
<div class="t" style="left:65px;top:647px;width:74px;height:27px;line-height:27px;color:#333333;font-size:13px;"><span style="letter-spacing:-0.5px">24-07-17</span></div>
<div class="t" style="left:140px;top:647px;width:74px;height:27px;line-height:27px;color:#111111;font-size:13px;"><span class="one"><span style="letter-spacing:-0.5px">1</span></span><span class=c>富图雷</span></div>
<div class="t" style="left:215px;top:647px;width:88px;height:27px;line-height:27px;color:#333333;font-size:13px;"><span style="color:#ff0000"><span style="letter-spacing:-0.5px">1-2</span></span><span style="letter-spacing:-0.5px">(1-1)</span></div>
<div class="t" style="left:304px;top:647px;width:39px;height:27px;line-height:27px;color:#333333;font-size:13px;"><span style="letter-spacing:-0.5px">0-9</span></div>
<div class="t" style="left:344px;top:647px;width:85px;height:27px;line-height:27px;color:#111111;font-size:13px;"><span style="color:#008000"><span class=c>开罗国民</span></span></div>
<div class="t" style="left:430px;top:647px;width:37px;height:27px;line-height:27px;color:#333333;font-size:13px;"><span style="letter-spacing:-0.5px">0.97</span></div>
<div class="t" style="left:468px;top:647px;width:81px;height:27px;line-height:27px;color:#2a58a0;font-size:13px;"><span style="color:#f00"><span style="letter-spacing:-0.5px">*</span></span><span class=c>一球</span></div>
<div class="t" style="left:550px;top:647px;width:38px;height:27px;line-height:27px;color:#333333;font-size:13px;"><span style="letter-spacing:-0.5px">0.92</span></div>
<div class="t" style="left:589px;top:647px;width:58px;height:27px;line-height:27px;color:#333333;font-size:13px;"><span style="letter-spacing:-0.5px">6.59</span></div>
<div class="t" style="left:648px;top:647px;width:58px;height:27px;line-height:27px;color:#3358a4;font-size:13px;"><span style="letter-spacing:-0.5px">3.76</span></div>
<div class="t" style="left:707px;top:647px;width:73px;height:27px;line-height:27px;color:#333333;font-size:13px;"><span style="letter-spacing:-0.5px">1.48</span></div>
<div class="t" style="left:781px;top:647px;width:38px;height:27px;line-height:27px;color:#ff0000;font-size:13px;"><span class=c>胜</span></div>
<div class="t" style="left:820px;top:647px;width:39px;height:27px;line-height:27px;color:#0000ff;font-size:13px;"><span class=c>走</span></div>
<div class="t" style="left:860px;top:647px;width:56px;height:27px;line-height:27px;color:#ff0000;font-size:13px;"><span class=c>大</span></div>
<div class="t" style="left:8px;top:675px;width:56px;height:27px;line-height:27px;color:#ffffff;font-size:13px;"><span class=c>埃及超</span></div>
<div class="t" style="left:65px;top:675px;width:74px;height:27px;line-height:27px;color:#333333;font-size:13px;"><span style="letter-spacing:-0.5px">24-07-13</span></div>
<div class="t" style="left:140px;top:675px;width:74px;height:27px;line-height:27px;color:#111111;font-size:13px;"><span style="color:#008000"><span class=c>开罗国民</span></span></div>
<div class="t" style="left:215px;top:675px;width:88px;height:27px;line-height:27px;color:#333333;font-size:13px;"><span style="color:#ff0000"><span style="letter-spacing:-0.5px">3-2</span></span><span style="letter-spacing:-0.5px">(1-1)</span></div>
<div class="t" style="left:304px;top:675px;width:39px;height:27px;line-height:27px;color:#333333;font-size:13px;"><span style="letter-spacing:-0.5px">3-4</span></div>
<div class="t" style="left:344px;top:675px;width:85px;height:27px;line-height:27px;color:#111111;font-size:13px;"><span class=c>金字塔</span></div>
<div class="t" style="left:430px;top:675px;width:37px;height:27px;line-height:27px;color:#333333;font-size:13px;"><span style="letter-spacing:-0.5px">1.05</span></div>
<div class="t" style="left:468px;top:675px;width:81px;height:27px;line-height:27px;color:#2a58a0;font-size:13px;"><span class=c>平</span><span style="letter-spacing:-0.5px"><span style="padding:0 0.8px">/</span></span><span class=c>半</span></div>
<div class="t" style="left:550px;top:675px;width:38px;height:27px;line-height:27px;color:#333333;font-size:13px;"><span style="letter-spacing:-0.5px">0.83</span></div>
<div class="t" style="left:589px;top:675px;width:58px;height:27px;line-height:27px;color:#333333;font-size:13px;"><span style="letter-spacing:-0.5px">2.30</span></div>
<div class="t" style="left:648px;top:675px;width:58px;height:27px;line-height:27px;color:#3358a4;font-size:13px;"><span style="letter-spacing:-0.5px">2.86</span></div>
<div class="t" style="left:707px;top:675px;width:73px;height:27px;line-height:27px;color:#333333;font-size:13px;"><span style="letter-spacing:-0.5px">3.25</span></div>
<div class="t" style="left:781px;top:675px;width:38px;height:27px;line-height:27px;color:#ff0000;font-size:13px;"><span class=c>胜</span></div>
<div class="t" style="left:820px;top:675px;width:39px;height:27px;line-height:27px;color:#ff0000;font-size:13px;"><span class=c>赢</span></div>
<div class="t" style="left:860px;top:675px;width:56px;height:27px;line-height:27px;color:#ff0000;font-size:13px;"><span class=c>大</span></div>
<div class="t" style="left:8px;top:703px;width:56px;height:27px;line-height:27px;color:#ffffff;font-size:13px;"><span class=c>埃及超</span></div>
<div class="t" style="left:65px;top:703px;width:74px;height:27px;line-height:27px;color:#333333;font-size:13px;"><span style="letter-spacing:-0.5px">24-07-08</span></div>
<div class="t" style="left:140px;top:703px;width:74px;height:27px;line-height:27px;color:#111111;font-size:13px;"><span style="color:#008000"><span class=c>开罗国民</span></span></div>
<div class="t" style="left:215px;top:703px;width:88px;height:27px;line-height:27px;color:#333333;font-size:13px;"><span style="color:#ff0000"><span style="letter-spacing:-0.5px">2-0</span></span><span style="letter-spacing:-0.5px">(0-0)</span></div>
<div class="t" style="left:304px;top:703px;width:39px;height:27px;line-height:27px;color:#333333;font-size:13px;"><span style="letter-spacing:-0.5px">9-4</span></div>
<div class="t" style="left:344px;top:703px;width:85px;height:27px;line-height:27px;color:#111111;font-size:13px;"><span class=c>塔拉贾伊</span></div>
<div class="t" style="left:430px;top:703px;width:37px;height:27px;line-height:27px;color:#333333;font-size:13px;"><span style="letter-spacing:-0.5px">0.94</span></div>
<div class="t" style="left:468px;top:703px;width:81px;height:27px;line-height:27px;color:#2a58a0;font-size:13px;"><span class=c>两球</span></div>
<div class="t" style="left:550px;top:703px;width:38px;height:27px;line-height:27px;color:#333333;font-size:13px;"><span style="letter-spacing:-0.5px">0.94</span></div>
<div class="t" style="left:589px;top:703px;width:58px;height:27px;line-height:27px;color:#333333;font-size:13px;"><span style="letter-spacing:-0.5px">1.16</span></div>
<div class="t" style="left:648px;top:703px;width:58px;height:27px;line-height:27px;color:#3358a4;font-size:13px;"><span style="letter-spacing:-0.5px">6.54</span></div>
<div class="t" style="left:707px;top:703px;width:73px;height:27px;line-height:27px;color:#333333;font-size:13px;"><span style="letter-spacing:-0.5px">14.39</span></div>
<div class="t" style="left:781px;top:703px;width:38px;height:27px;line-height:27px;color:#ff0000;font-size:13px;"><span class=c>胜</span></div>
<div class="t" style="left:820px;top:703px;width:39px;height:27px;line-height:27px;color:#0000ff;font-size:13px;"><span class=c>走</span></div>
<div class="t" style="left:860px;top:703px;width:56px;height:27px;line-height:27px;color:#008000;font-size:13px;"><span class=c>小</span></div>
<div class="t" style="left:8px;top:731px;width:56px;height:27px;line-height:27px;color:#ffffff;font-size:13px;"><span class=c>埃及超</span></div>
<div class="t" style="left:65px;top:731px;width:74px;height:27px;line-height:27px;color:#333333;font-size:13px;"><span style="letter-spacing:-0.5px">24-07-04</span></div>
<div class="t" style="left:140px;top:731px;width:74px;height:27px;line-height:27px;color:#111111;font-size:13px;"><span style="color:#008000"><span class=c>开罗国民</span></span></div>
<div class="t" style="left:215px;top:731px;width:88px;height:27px;line-height:27px;color:#333333;font-size:13px;"><span style="color:#ff0000"><span style="letter-spacing:-0.5px">4-1</span></span><span style="letter-spacing:-0.5px">(2-0)</span></div>
<div class="t" style="left:304px;top:731px;width:39px;height:27px;line-height:27px;color:#333333;font-size:13px;"><span style="letter-spacing:-0.5px">11-2</span></div>
<div class="t" style="left:344px;top:731px;width:85px;height:27px;line-height:27px;color:#111111;font-size:13px;"><span style="letter-spacing:-0.5px">El</span><span class=c>达克</span></div>
<div class="t" style="left:430px;top:731px;width:37px;height:27px;line-height:27px;color:#333333;font-size:13px;"><span style="letter-spacing:-0.5px">0.89</span></div>
<div class="t" style="left:468px;top:731px;width:81px;height:27px;line-height:27px;color:#2a58a0;font-size:13px;"><span class=c>两</span><span style="letter-spacing:-0.5px"><span style="padding:0 0.8px">/</span></span><span class=c>两球半</span></div>
<div class="t" style="left:550px;top:731px;width:38px;height:27px;line-height:27px;color:#333333;font-size:13px;"><span style="letter-spacing:-0.5px">0.99</span></div>
<div class="t" style="left:589px;top:731px;width:58px;height:27px;line-height:27px;color:#333333;font-size:13px;"><span style="letter-spacing:-0.5px">4.19</span></div>
<div class="t" style="left:648px;top:731px;width:58px;height:27px;line-height:27px;color:#3358a4;font-size:13px;"><span style="letter-spacing:-0.5px">7.48</span></div>
<div class="t" style="left:707px;top:731px;width:73px;height:27px;line-height:27px;color:#333333;font-size:13px;"><span style="letter-spacing:-0.5px">15.20</span></div>
<div class="t" style="left:781px;top:731px;width:38px;height:27px;line-height:27px;color:#ff0000;font-size:13px;"><span class=c>胜</span></div>
<div class="t" style="left:820px;top:731px;width:39px;height:27px;line-height:27px;color:#ff0000;font-size:13px;"><span class=c>赢</span></div>
<div class="t" style="left:860px;top:731px;width:56px;height:27px;line-height:27px;color:#ff0000;font-size:13px;"><span class=c>大</span></div>
<div class="t" style="left:8px;top:759px;width:908px;height:27px;line-height:27px;color:#111111;font-size:13px;"></div>
<div style="left:431px;top:762px;width:42px;height:2px;background:#ff0000;"></div>
</body></html>
